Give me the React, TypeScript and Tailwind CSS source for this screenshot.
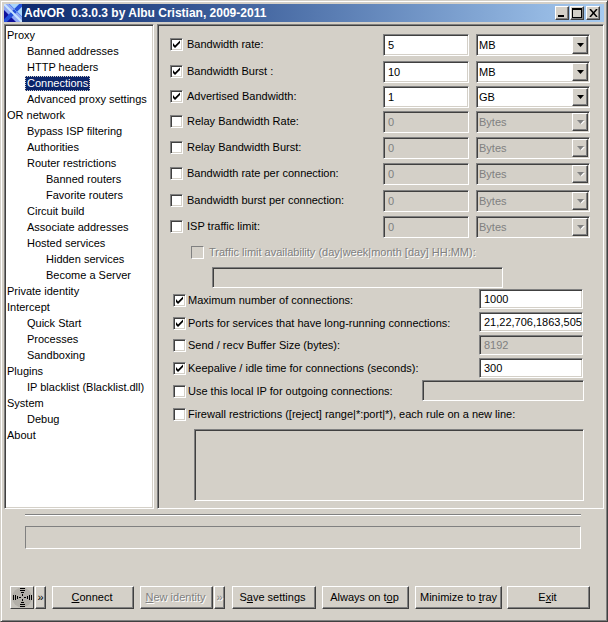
import React from "react";

const sunken =
  "border border-t-[#808080] border-l-[#808080] border-b-white border-r-white shadow-[inset_1px_1px_0_#404040,inset_-1px_-1px_0_#d4d0c8]";
const raised =
  "border border-t-white border-l-white border-b-[#404040] border-r-[#404040] shadow-[inset_-1px_-1px_0_#808080]";
const disabledText = "text-[#808080] [text-shadow:1px_1px_0_#ffffff]";

function Check({ checked }: { checked?: boolean }) {
  return (
    <span className={`block w-[13px] h-[13px] shrink-0 bg-white ${sunken}`}>
      {checked && (
        <svg width="11" height="11" viewBox="0 0 11 11" className="block">
          <path d="M2 4v3l2 2 5-5V1.500L4 6.500z" fill="#000" />
        </svg>
      )}
    </span>
  );
}

function Field({ value, disabled, className }: { value?: string; disabled?: boolean; className: string }) {
  return (
    <div
      className={`shrink-0 overflow-hidden whitespace-nowrap pl-[4px] leading-[14px] ${sunken} ${className} ${
        disabled ? "bg-[#d4d0c8] text-[#808080]" : "bg-white text-black"
      }`}
    >
      {value}
    </div>
  );
}

function Arrow({ disabled }: { disabled?: boolean }) {
  return (
    <svg width="7" height="4" viewBox="0 0 7 4" className="block overflow-visible">
      {disabled && <path d="M1 1h7L4.500 4.500z" fill="#fff" />}
      <path d="M0 0h7L3.500 4z" fill={disabled ? "#808080" : "#000"} />
    </svg>
  );
}

function Select({ value, disabled }: { value: string; disabled?: boolean }) {
  return (
    <div
      className={`relative ml-[7px] w-[114px] h-[22px] shrink-0 pl-[2px] pt-[3px] leading-[14px] ${sunken} ${
        disabled ? "bg-[#d4d0c8] text-[#808080]" : "bg-white text-black"
      }`}
    >
      {value}
      <span
        className={`absolute right-[1px] top-[1px] w-[16px] h-[18px] flex items-center justify-center bg-[#d4d0c8] ${raised}`}
      >
        <Arrow disabled={disabled} />
      </span>
    </div>
  );
}

const bwRows = [
  { h: "h-[27px]", label: "Bandwidth rate:", on: true, v: "5", u: "MB" },
  { h: "h-[25px]", label: "Bandwidth Burst :", on: true, v: "10", u: "MB" },
  { h: "h-[25px]", label: "Advertised Bandwidth:", on: true, v: "1", u: "GB" },
  { h: "h-[26px]", label: "Relay Bandwidth Rate:", on: false, v: "0", u: "Bytes" },
  { h: "h-[26px]", label: "Relay Bandwidth Burst:", on: false, v: "0", u: "Bytes" },
  { h: "h-[27px]", label: "Bandwidth rate per connection:", on: false, v: "0", u: "Bytes" },
  { h: "h-[26px]", label: "Bandwidth burst per connection:", on: false, v: "0", u: "Bytes" },
  { h: "h-[22px]", label: "ISP traffic limit:", on: false, v: "0", u: "Bytes" },
];

const tree: [string, number][] = [
  ["Proxy", 0],
  ["Banned addresses", 1],
  ["HTTP headers", 1],
  ["Connections", 1],
  ["Advanced proxy settings", 1],
  ["OR network", 0],
  ["Bypass ISP filtering", 1],
  ["Authorities", 1],
  ["Router restrictions", 1],
  ["Banned routers", 2],
  ["Favorite routers", 2],
  ["Circuit build", 1],
  ["Associate addresses", 1],
  ["Hosted services", 1],
  ["Hidden services", 2],
  ["Become a Server", 2],
  ["Private identity", 0],
  ["Intercept", 0],
  ["Quick Start", 1],
  ["Processes", 1],
  ["Sandboxing", 1],
  ["Plugins", 0],
  ["IP blacklist (Blacklist.dll)", 1],
  ["System", 0],
  ["Debug", 1],
  ["About", 0],
];

function Btn({ className, disabled, children }: { className: string; disabled?: boolean; children: React.ReactNode }) {
  return (
    <div
      className={`h-[23px] shrink-0 flex items-center justify-center whitespace-nowrap bg-[#d4d0c8] ${raised} ${className} ${
        disabled ? disabledText : "text-black"
      }`}
    >
      {children}
    </div>
  );
}

function Row2({
  on,
  label,
  value,
  disabled,
  h,
  labelH,
}: {
  on: boolean;
  label: string;
  value: string;
  disabled?: boolean;
  h: string;
  labelH: string;
}) {
  return (
    <div className={`flex items-start ${h}`}>
      <div className={`flex items-center w-[306px] ml-[3px] ${labelH}`}>
        <Check checked={on} />
        <span className="ml-[2px] text-black">{label}</span>
      </div>
      <Field value={value} disabled={disabled} className="w-[104px] h-[20px] pt-[2px]" />
    </div>
  );
}

function WinBtn({ children }: { children: React.ReactNode }) {
  return (
    <span className={`w-[14px] h-[14px] flex items-center justify-center bg-[#d4d0c8] ${raised}`}>{children}</span>
  );
}

export default function App() {
  return (
    <div className="w-[608px] h-[622px] overflow-hidden bg-[#d4d0c8] border border-t-[#d4d0c8] border-l-[#d4d0c8] border-b-[#404040] border-r-[#404040] shadow-[inset_1px_1px_0_#ffffff,inset_-1px_-1px_0_#808080] px-[3px] pt-[3px] text-[11px] leading-[16px] text-black [font-family:'Liberation_Sans',Arial,sans-serif] flex flex-col">
      <div className="h-[18px] shrink-0 flex items-center bg-gradient-to-r from-[#0a246a] to-[#a6caf0] text-white font-bold text-[12px] pr-[4px]">
        <svg width="18" height="18" viewBox="0 0 18 18" className="shrink-0">
          <rect width="18" height="18" fill="#8fa8f4" />
          <path d="M0 18L0 6L12 18z" fill="#10109c" />
          <path d="M18 0L18 12L6 0z" fill="#a8d4fa" />
          <path d="M18 0L0 18" stroke="#2450d8" strokeWidth="4" />
          <path d="M0 0L18 18" stroke="#c8e4ff" strokeWidth="2" />
          <path d="M5 0L18 13" stroke="#5a8cf0" strokeWidth="1" />
        </svg>
        <span className="ml-[2px] whitespace-pre flex-1">AdvOR  0.3.0.3 by Albu Cristian, 2009-2011</span>
        <WinBtn>
          <svg width="8" height="10" viewBox="0 0 8 10" className="block"><rect x="0" y="7" width="6" height="2" fill="#000" /></svg>
        </WinBtn>
        <span className="w-[1px]" />
        <WinBtn>
          <svg width="10" height="10" viewBox="0 0 10 10" className="block"><path d="M0 0h10v10H0zM1 2v7h8V2z" fill="#000" fillRule="evenodd" /></svg>
        </WinBtn>
        <span className="w-[2px]" />
        <WinBtn>
          <svg width="9" height="8" viewBox="0 0 9 8" className="block"><path d="M1 0L8 8M8 0L1 8" stroke="#000" strokeWidth="1.500" /></svg>
        </WinBtn>
      </div>

      <div className="flex mt-[2px] h-[485px] shrink-0">
        <div className={`w-[150px] shrink-0 bg-white pt-[2px] overflow-hidden ${sunken}`}>
          {tree.map(([t, lvl]) => (
            <div key={t} className={`h-[16px] flex items-center ${lvl === 0 ? "pl-[1px]" : lvl === 1 ? "pl-[21px]" : "pl-[40px]"}`}>
              {t === "Connections" ? (
                <span className="-ml-[1px] px-[2px] h-[15px] leading-[14px] bg-[#0a246a] text-white outline-1 outline-dotted outline-[#d4d0c8] -outline-offset-1">
                  {t}
                </span>
              ) : (
                <span className="px-[1px]">{t}</span>
              )}
            </div>
          ))}
        </div>

        <div className={`ml-[3px] flex-1 pt-[9px] pl-[12px] ${sunken}`}>
          {bwRows.map((r) => (
            <div key={r.label} className={`flex items-start ${r.h}`}>
              <div className="flex items-center h-[20px] w-[213px]">
                <Check checked={r.on} />
                <span className="ml-[4px]">{r.label}</span>
              </div>
              <Field value={r.v} disabled={!r.on} className="w-[86px] h-[22px] pt-[3px]" />
              <Select value={r.u} disabled={!r.on} />
            </div>
          ))}

          <div className="flex items-center h-[16px] mt-[6px] pl-[21px]">
            <span className="block w-[13px] h-[13px] shrink-0 border border-[#808080] border-b-white border-r-white" />
            <span className={`ml-[5px] ${disabledText}`}>Traffic limit availability (day|week|month [day] HH:MM):</span>
          </div>
          <div className={`w-[291px] h-[21px] ml-[42px] mt-[7px] ${sunken}`} />

          <div className="mt-[1px]">
            <Row2 h="h-[23px]" labelH="h-[22px]" on label="Maximum number of connections:" value="1000" />
            <Row2 h="h-[23px]" labelH="h-[22px]" on label="Ports for services that have long-running connections:" value="21,22,706,1863,5050" />
            <Row2 h="h-[23px]" labelH="h-[20px]" on={false} label="Send / recv Buffer Size (bytes):" value="8192" disabled />
            <Row2 h="h-[22px]" labelH="h-[20px]" on label="Keepalive / idle time for connections (seconds):" value="300" />
            <div className="flex items-start h-[24px] ml-[3px]">
              <div className="flex items-center h-[22px] w-[249px]">
                <Check />
                <span className="ml-[2px]">Use this local IP for outgoing connections:</span>
              </div>
              <div className={`w-[162px] h-[21px] ${sunken}`} />
            </div>
            <div className="flex items-center h-[20px] ml-[3px]">
              <Check />
              <span className="ml-[2px]">Firewall restrictions ([reject] range|*:port|*), each rule on a new line:</span>
            </div>
            <div className={`ml-[24px] mt-[5px] w-[390px] h-[72px] ${sunken}`} />
          </div>
        </div>
      </div>

      <div className="ml-[21px] w-[556px] mt-[5px] h-[2px] shrink-0 border-t border-t-[#808080] border-b border-b-white" />
      <div className="ml-[21px] w-[556px] mt-[10px] h-[23px] shrink-0 border border-t-[#808080] border-l-[#808080] border-b-white border-r-white" />

      <div className="flex ml-[6px] mt-[37px]">
        <Btn className="w-[24px]">
          <svg width="22" height="21" viewBox="0 0 22 21" className="block">
            <rect width="22" height="21" fill="#c4c1ba" />
            <circle cx="11" cy="10.500" r="10" fill="#b2afa8" />
            <g fill="#000">
              <rect x="9" y="1" width="5" height="1" />
              <rect x="9" y="3" width="5" height="1" />
              <rect x="10" y="5" width="3" height="1" />
              <rect x="11" y="7" width="1" height="2" />
              <rect x="11" y="12" width="1" height="2" />
              <rect x="10" y="15" width="3" height="1" />
              <rect x="9" y="17" width="5" height="1" />
              <rect x="9" y="19" width="5" height="1" />
              <rect x="2" y="8" width="1" height="5" />
              <rect x="4" y="8" width="1" height="5" />
              <rect x="6" y="9" width="1" height="3" />
              <rect x="8" y="10" width="2" height="1" />
              <rect x="13" y="10" width="2" height="1" />
              <rect x="16" y="9" width="1" height="3" />
              <rect x="18" y="8" width="1" height="5" />
              <rect x="20" y="8" width="1" height="5" />
            </g>
          </svg>
        </Btn>
        <Btn className="w-[11px] ml-[1px] pb-[1px]">»</Btn>
        <Btn className="w-[82px] ml-[6px] pb-[1px] pr-[2px]"><span><span className="underline">C</span>onnect</span></Btn>
        <Btn className="w-[73px] ml-[6px] pb-[1px] pr-[2px]" disabled><span><span className="underline">N</span>ew identity</span></Btn>
        <Btn className="w-[11px] ml-[1px] pb-[1px]" disabled>»</Btn>
        <Btn className="w-[84px] ml-[7px] pb-[1px] pr-[3px]"><span>S<span className="underline">a</span>ve settings</span></Btn>
        <Btn className="w-[87px] ml-[6px] pb-[1px] pr-[2px]"><span>Always on t<span className="underline">o</span>p</span></Btn>
        <Btn className="w-[87px] ml-[6px] pb-[1px]"><span>Minimize to <span className="underline">t</span>ray</span></Btn>
        <Btn className="w-[83px] ml-[5px] pb-[1px] pr-[2px]"><span>E<span className="underline">x</span>it</span></Btn>
      </div>
    </div>
  );
}
